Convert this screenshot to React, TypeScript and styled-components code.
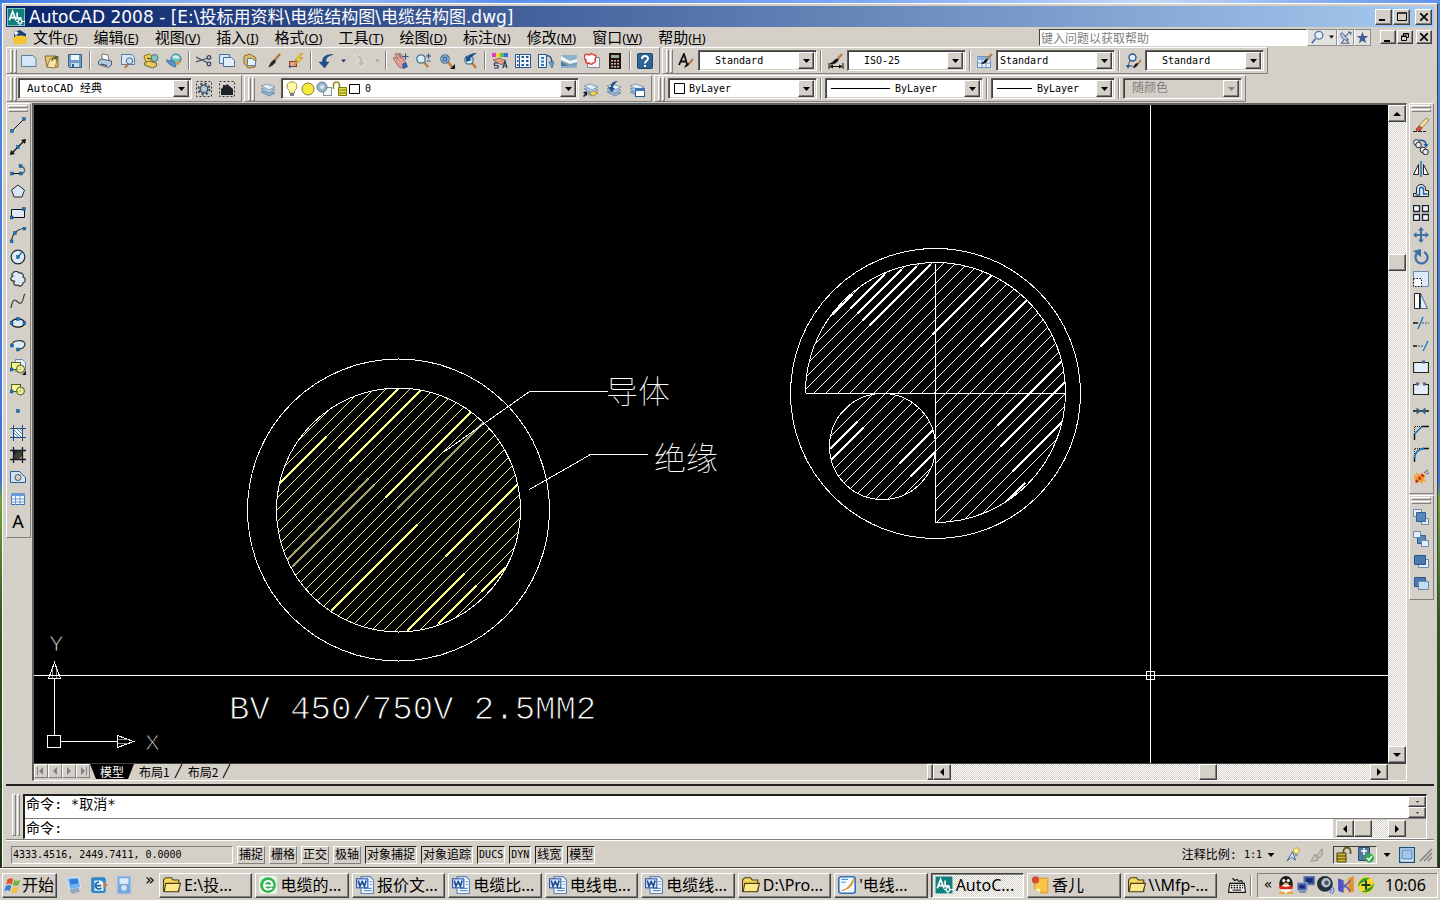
import React, { ReactNode } from "react";
import styled, { createGlobalStyle, css } from "styled-components";

const face = "#d4d0c8";
const han = '"Noto Sans CJK SC", sans-serif';
const ui = `"Noto Sans", ${han}`;
const mono = `"DejaVu Sans Mono", ${han}`;

const GlobalStyle = createGlobalStyle`
  *, *::before, *::after { box-sizing: border-box; }
  body { margin: 0; background: ${face}; color: #000; font-family: ${ui}; }
  button, select, input { font: inherit; color: inherit; margin: 0; padding: 0; border-radius: 0; }
  svg { display: block; flex: none; }
`;

const raised = css`
  background-color: ${face};
  border: 1px solid;
  border-color: #fff #404040 #404040 #fff;
  box-shadow: inset -1px -1px #808080;
`;
const checker = css`
  background: repeating-conic-gradient(#fff 0 25%, ${face} 0 50%) 0 0 / 2px 2px;
`;

/* ---------- page ---------- */
const Desktop = styled.div`
  min-height: 100vh;
  display: flex;
  flex-direction: column;
  background: linear-gradient(#4f86e6 0, #3f6fd8 480px, #6fa338 500px, #2f5a20 620px, #1c3010 100%);
`;
const Wallpaper = styled.div`
  height: 3px;
  background: linear-gradient(90deg, #3f7be4, #a9c6f6 20%, #5c8ff0 35%, #7fa8f4 60%, #c4d8f8 80%, #5f92ea);
`;
const AppWindow = styled.main`
  flex: 1;
  display: flex;
  flex-direction: column;
  margin: 0 2px;
  padding: 2px 3px 0;
  background: ${face};
  border: 1px solid;
  border-color: #fff #404040 #404040 #fff;
`;
const TitleBar = styled.header`
  display: flex;
  align-items: center;
  height: 21px;
  padding: 0 2px 0 1px;
  background: linear-gradient(90deg, #0a246a, #a6caf0);
  color: #fff;
`;
const TitleText = styled.h1`
  flex: 1;
  margin: 0 0 0 4px;
  font-family: "DejaVu Sans", ${han};
  font-size: 17px;
  line-height: 20px;
  font-weight: 400;
  white-space: nowrap;
`;
const CaptionGroup = styled.div`
  display: flex;
  gap: 1px;
  margin-right: 5px;
`;
const CaptionButton = styled.button`
  ${raised}
  display: grid;
  place-items: center;
  width: 17px;
  height: 16px;
`;
const MenuBar = styled.nav`
  display: flex;
  align-items: center;
  height: 20px;
  padding: 0 2px 0 1px;
`;
const MenuItem = styled.button`
  border: 0;
  background: none;
  margin-right: 16px;
  font-family: ${han};
  font-size: 15px;
  line-height: 20px;
  white-space: nowrap;
`;
const Key = styled.span`
  font-family: "Noto Sans", sans-serif;
  font-size: 13px;
`;
const Fill = styled.div`
  flex: 1;
`;
const Ask = styled.input`
  width: 268px;
  height: 17px;
  padding: 0 0 0 1px;
  border: 1px solid;
  border-color: #404040 #fff #fff #404040;
  background: #fff;
  font-family: ${han};
  font-size: 12px;
  &::placeholder { color: #808080; opacity: 1; }
`;
const AskButton = styled.button<{ $wide?: boolean }>`
  display: flex;
  align-items: center;
  justify-content: center;
  gap: 4px;
  width: ${(p) => (p.$wide ? 30 : 17)}px;
  height: 17px;
  border: 1px solid #909090;
  border-left-color: #fff;
  background: #e4e2de;
`;
const MdiGroup = styled.div`
  display: flex;
  gap: 1px;
  margin-left: 9px;
  & > :last-child { margin-left: 2px; }
`;
const MdiButton = styled(CaptionButton)`
  width: 16px;
  height: 14px;
`;

/* ---------- toolbars ---------- */
const ToolRow = styled.div`
  display: flex;
  align-items: flex-start;
  gap: 2px;
  height: 28px;
`;
const ToolStrip = styled.div<{ $gap?: number }>`
  display: flex;
  align-items: center;
  gap: ${(p) => p.$gap ?? 1}px;
  height: 27px;
  padding: 0 3px;
  border: 1px solid;
  border-color: #fff #808080 #808080 #fff;
`;
const Grip = styled.span<{ $flat?: boolean; $after?: number }>`
  flex: none;
  display: flex;
  flex-direction: ${(p) => (p.$flat ? "column" : "row")};
  gap: 1px;
  width: ${(p) => (p.$flat ? "20px" : "7px")};
  height: ${(p) => (p.$flat ? "7px" : "24px")};
  margin-right: ${(p) => p.$after ?? 0}px;
  &::before, &::after {
    content: "";
    flex: 1;
    border: 1px solid;
    border-color: #fff #808080 #808080 #fff;
  }
`;
const Rule = styled.span`
  flex: none;
  width: 2px;
  height: 19px;
  margin: 0 2px;
  background: linear-gradient(90deg, #808080 50%, #fff 50%);
`;
const Divider = styled.span`
  flex: none;
  width: 2px;
  height: 21px;
  margin: 0 3px;
  background: linear-gradient(90deg, #808080 50%, #fff 50%);
`;
const ToolButton = styled.button<{ $w?: number }>`
  flex: none;
  display: grid;
  place-items: center;
  width: ${(p) => p.$w ?? 22}px;
  height: 22px;
  border: 0;
  background: none;
  font-family: "Noto Sans", sans-serif;
  font-size: 18px;
  line-height: 22px;
`;
const Combo = styled.label<{ $w: number; $off?: boolean }>`
  flex: none;
  display: flex;
  align-items: center;
  width: ${(p) => p.$w}px;
  height: 21px;
  border: 1px solid;
  border-color: #606060 #fff #fff #606060;
  box-shadow: inset 1px 1px #404040, inset -1px -1px ${face};
  padding: 2px;
  background: ${(p) => (p.$off ? face : "#fff")};
  color: ${(p) => (p.$off ? "#808080" : "#000")};
`;
const ComboSelect = styled.select<{ $pad: number; $size: number }>`
  appearance: none;
  flex: 1;
  min-width: 0;
  height: 17px;
  padding: 0 0 0 ${(p) => p.$pad}px;
  border: 0;
  background: none;
  font-family: ${mono};
  font-size: ${(p) => p.$size}px;
  line-height: 17px;
  &:disabled { opacity: 1; }
`;
const ComboArrow = styled.span`
  ${raised}
  flex: none;
  display: grid;
  place-items: center;
  width: 16px;
  height: 17px;
`;
const Work = styled.div`
  flex: 1;
  display: flex;
  min-height: 560px;
`;
const SideBar = styled.div`
  flex: none;
  width: 25px;
  display: flex;
  flex-direction: column;
  gap: 1px;
`;
const SideStrip = styled.div`
  display: flex;
  flex-direction: column;
  align-items: center;
  padding: 1px 1px 5px 0;
  border: 1px solid;
  border-color: #fff #808080 #808080 #fff;
  & > :first-child { margin-bottom: 2px; }
`;
const Viewport = styled.section`
  flex: 1;
  min-width: 0;
  display: flex;
  flex-direction: column;
  margin: 0 2px 0 1px;
  border: solid;
  border-width: 2px 1px 1px 2px;
  border-color: #606060 #fff #fff #606060;
`;
const ViewRow = styled.div`
  flex: 1;
  display: flex;
  min-height: 0;
`;
const ModelSpace = styled.div`
  flex: 1;
  min-width: 0;
  display: grid;
  background: #000;
  overflow: hidden;
`;
const Drawing = styled.svg`
  width: 100%;
  height: 100%;
  min-height: 0;
`;
const Leader = styled.text`
  fill: #fff;
  font-family: ${han};
  font-weight: 100;
  font-size: 32px;
`;
const Caption = styled.text`
  fill: #fff;
  font-family: "Liberation Mono", monospace;
  font-size: 34px;
  stroke: #000;
  stroke-width: 1;
`;
const AxisName = styled.text`
  fill: #fff;
  font-family: "Liberation Sans", sans-serif;
  font-size: 22px;
  stroke: #000;
  stroke-width: 1;
`;
const ScrollTrack = styled.div<{ $across?: boolean }>`
  flex: ${(p) => (p.$across ? "0 1 455px" : "none")};
  display: flex;
  flex-direction: ${(p) => (p.$across ? "row" : "column")};
  ${(p) => (p.$across ? "height: 16px;" : "width: 18px;")}
  ${checker}
`;
const ScrollButton = styled.button<{ $w?: number; $h?: number }>`
  ${raised}
  flex: none;
  display: grid;
  place-items: center;
  width: ${(p) => p.$w ?? 18}px;
  height: ${(p) => p.$h ?? 17}px;
`;
const Space = styled.span<{ $grow: number }>`
  flex: ${(p) => p.$grow} 1 0;
`;
const TabRow = styled.div`
  display: flex;
  align-items: flex-start;
  height: 17px;
  border-top: 1px solid #404040;
`;
const TabNav = styled.button`
  display: grid;
  place-items: center;
  width: 14px;
  height: 14px;
  border: 1px solid;
  border-color: #fff #808080 #808080 #fff;
  background: ${face};
`;
const Tab = styled.button<{ $on?: boolean }>`
  height: 15px;
  padding: 0 ${(p) => (p.$on ? 10 : 4)}px;
  margin-left: ${(p) => (p.$on ? 0 : 1)}px;
  border: 0;
  background: ${(p) => (p.$on ? "#000" : "none")};
  color: ${(p) => (p.$on ? "#fff" : "#000")};
  clip-path: ${(p) => (p.$on ? "polygon(0 0, 100% 0, calc(100% - 6px) 100%, 6px 100%)" : "none")};
  font-family: ${han};
  font-size: 12px;
  line-height: 13px;
  white-space: nowrap;
`;
const SplitBar = styled.span`
  ${raised}
  flex: none;
  width: 6px;
  height: 16px;
`;
const Corner = styled.span`
  flex: none;
  width: 18px;
`;

/* ---------- command line ---------- */
const Command = styled.section`
  display: flex;
  height: 56px;
  padding: 8px 7px 0 6px;
  margin-top: 3px;
  border-top: 2px solid #202020;
  border-bottom: 1px solid #808080;
`;
const CommandGrip = styled(Grip)`
  height: 42px;
  width: 8px;
  margin-right: 3px;
`;
const CommandBox = styled.div`
  flex: 1;
  min-width: 0;
  border: 2px solid;
  border-width: 2px 1px 1px 2px;
  border-color: #202020 #fff #fff #202020;
`;
const CommandRow = styled.div<{ $last?: boolean }>`
  display: flex;
  height: ${(p) => (p.$last ? 19 : 23)}px;
  ${(p) => !p.$last && "border-bottom: 1px solid #808080;"}
`;
const CommandText = styled.div`
  flex: 1;
  display: flex;
  padding-left: 1px;
  background: #fff;
  font-family: ${mono};
  font-size: 14px;
  line-height: 16px;
`;
const Prompt = styled.label`
  line-height: 18px;
`;
const CommandInput = styled.input`
  flex: 1;
  min-width: 0;
  border: 0;
  outline: 0;
  background: none;
`;
const Stepper = styled.div`
  display: flex;
  flex-direction: column;
`;
const HistoryScroll = styled.div`
  flex: none;
  display: flex;
  width: 70px;
  margin: 1px 20px 0 3px;
  ${checker}
`;

/* ---------- status bar ---------- */
const StatusBar = styled.footer`
  display: flex;
  align-items: center;
  height: 27px;
  padding: 1px 1px 0 5px;
  border-top: 1px solid #fff;
  font-family: ${mono};
  font-size: 12px;
`;
const Coords = styled.output`
  width: 222px;
  height: 18px;
  padding-left: 1px;
  margin-right: 4px;
  border: 1px solid;
  border-color: #808080 #fff #fff #808080;
  font-size: 10px;
  line-height: 16px;
`;
const Toggles = styled.div`
  display: flex;
  gap: 4px;
`;
const Toggle = styled.button<{ $on?: boolean; $latin?: boolean }>`
  height: 18px;
  padding: 0 1px;
  border: 1px solid;
  border-color: ${(p) => (p.$on ? "#202020 #fff #fff #202020" : "#fff #808080 #808080 #fff")};
  background: none;
  font-size: ${(p) => (p.$latin ? 10 : 12)}px;
  line-height: 16px;
  white-space: nowrap;
`;
const Scale = styled.button`
  display: flex;
  align-items: center;
  gap: 5px;
  border: 0;
  background: none;
  line-height: 16px;
  margin-right: 6px;
`;
const ScaleValue = styled.span`
  font-size: 10px;
  margin-left: 2px;
`;
const StatusIcon = styled.button<{ $w?: number }>`
  display: grid;
  place-items: center;
  width: ${(p) => p.$w ?? 24}px;
  height: 18px;
  border: 0;
  background: none;
`;
const TrayBox = styled.div`
  display: flex;
  gap: 2px;
  width: 44px;
  height: 18px;
  margin: 0 2px 0 4px;
  border: 1px solid;
  border-color: #404040 #fff #fff #404040;
  & > button { width: 20px; height: 16px; }
`;

/* ---------- taskbar ---------- */
const TaskBar = styled.footer`
  display: flex;
  align-items: center;
  height: 32px;
  padding: 1px 2px 0;
  border-top: 1px solid #fff;
  background: ${face};
  font-size: 16px;
`;
const TaskButton = styled.button<{ $start?: boolean; $on?: boolean }>`
  ${raised}
  flex: ${(p) => (p.$start ? "none" : "1 1 0")};
  min-width: 0;
  display: flex;
  align-items: center;
  gap: ${(p) => (p.$start ? 0 : 3)}px;
  width: ${(p) => (p.$start ? 55 : 93)}px;
  height: 25px;
  padding: 0 1px 0 ${(p) => (p.$start ? 1 : 3)}px;
  white-space: nowrap;
  overflow: hidden;
  ${(p) =>
    p.$on &&
    css`
      ${checker}
      border-color: #404040 #fff #fff #404040;
      box-shadow: inset 1px 1px #808080;
    `}
`;
const TaskText = styled.span`
  line-height: 22px;
`;
const QuickLaunch = styled.div`
  display: flex;
  gap: 7px;
  margin: 0 11px 0 8px;
`;
const QuickButton = styled.button`
  display: grid;
  place-items: center;
  width: 18px;
  height: 20px;
  border: 0;
  background: none;
`;
const More = styled.button`
  width: 12px;
  height: 22px;
  margin-right: 3px;
  border: 0;
  background: none;
  font-family: "DejaVu Sans", sans-serif;
  font-size: 16px;
  line-height: 12px;
  padding-bottom: 10px;
`;
const Tasks = styled.div`
  flex: 1;
  min-width: 0;
  display: flex;
  gap: 3px;
`;
const Keyboard = styled(QuickButton)`
  width: 20px;
  margin: 0 0 0 10px;
`;
const Tray = styled.div`
  display: flex;
  align-items: center;
  gap: 3px;
  width: 181px;
  height: 25px;
  margin-left: 2px;
  padding-left: 4px;
  border: 1px solid;
  border-color: #808080 #fff #fff #808080;
`;
const Clock = styled.time`
  margin-left: 8px;
  font-size: 16px;
`;
const TrayMore = styled(More)`
  margin: 0;
  padding-bottom: 2px;
  font-size: 14px;
`;
const TrayIcon = styled(QuickButton)`
  width: 17px;
`;

/* ---------- icon art, drawn on a 16 by 16 grid ---------- */
const Dot = ({ x, y }: { x: number; y: number }) => (
  <rect x={x - 1.5} y={y - 1.5} width="3" height="3" fill="#1976b8" stroke="#0b3f70" strokeWidth=".4" />
);
const Down = ({ w = 7, fill = "#000" }: { w?: number; fill?: string }) => (
  <svg width={w} height="4" viewBox="0 0 7 4" aria-hidden="true"><path d="M0 0h7L3.500 4z" fill={fill} /></svg>
);
const Arrow = ({ dir, fill = "#000", bar }: { dir: "l" | "r" | "u" | "d"; fill?: string; bar?: boolean }) => {
  const d = { l: "M6 0v8L2 4z", r: "M2 0v8l4-4z", u: "M0 6h8L4 2z", d: "M0 2h8L4 6z" }[dir];
  return (
    <svg width="8" height="8" viewBox="0 0 8 8" aria-hidden="true">
      <path d={d} fill={fill} />
      {bar && <path d={dir === "l" ? "M0 0h1v8H0z" : "M7 0h1v8H7z"} fill={fill} />}
    </svg>
  );
};

const sheet = "#d6e6f4";
const blue = "#3f6fa8";
const lens = (x: number, y: number) => (
  <>
    <path d={`M${x + 3} ${y + 3}l4 5`} stroke="#c07a3a" strokeWidth="2.400" />
    <circle cx={x} cy={y} r="4.200" fill="#d7ecfa" stroke="#4f7188" strokeWidth="1.300" />
  </>
);
const layers = (x = 0, y = 0) => (
  <g transform={`translate(${x} ${y})`} stroke="#5d7f9e" strokeWidth=".7">
    <path d="M1 11l6-2 8 3-6 3z" fill="#8fb0cc" />
    <path d="M1 8l6-2 8 3-6 3z" fill="#b8cfe2" />
    <path d="M1 5l6-2 8 3-6 3z" fill="#e2edf6" />
  </g>
);
const brush = (
  <>
    <path d="M15 1L9 8" stroke="#a9703a" strokeWidth="2.200" />
    <path d="M9.500 6.500l1.500 1.800c-1 3-4 5.200-8 6.200 2-2 2-6 6.500-8z" fill="#2b2b2b" />
  </>
);
const block = (
  <>
    <rect x="1.500" y="3.500" width="9" height="7" fill="#f4f49a" stroke="#55601a" />
    <circle cx="10.500" cy="10" r="4" fill="#f0f08a" stroke="#55601a" fillOpacity=".75" />
    <Dot x={1.5} y={10.5} />
  </>
);
const cross = (x: number, y: number) => (
  <path d={`M${x - 3} ${y}h6M${x} ${y - 3}v6`} stroke="#2a5590" strokeWidth="1.200" />
);

const art: Record<string, ReactNode> = {
  app: (<>
    <rect width="16" height="16" fill="#0f7f7c" /><rect x="0" y="0" width="16" height="16" fill="none" stroke="#d8f0ee" />
    <path d="M2 11L5 3l3 8M3 8.500h4M9 4v5h4" stroke="#fff" strokeWidth="1.500" fill="none" />
    <path d="M11.500 8v8M8 12h8" stroke="#fff" /><rect x="10" y="10.500" width="3" height="3" fill="#0f7f7c" stroke="#fff" />
  </>),
  dwg: (<>
    <path d="M2 3l6-2 6 4v6H2z" fill="#1d3f78" /><path d="M1 9c4-3 9-3 14-1v6c-5 1-9 2-13 1z" fill="#f2c531" />
    <path d="M4 1l1 2 2 1-2 1-1 3-1-3-2-1 2-1z" fill="#fff" stroke="#7da2c8" strokeWidth=".4" />
  </>),
  new: <path d="M.5 2.500h11.500l3 3v8H.5z" fill={sheet} stroke="#5a7ea3" />,
  open: (<><path d="M1 3h8l5 3v8H3z" fill="#e8c678" stroke="#8a6524" /><path d="M3 14l3-8 8-3-3 12z" fill="#f7e4ac" stroke="#a37c33" /><path d="M7 9c0-3 2-5 4-5l-1-2 5 2-3 4-.5-2C9 6 8 8 7 9z" fill="#5c6034" /></>),
  save: (<><path d="M1.500 1.500h13v13h-12l-1-1z" fill="#6f9cc8" stroke="#32608f" /><path d="M4 2h8v5H4z" fill="#eef5fb" /><path d="M4 10h8v4H4z" fill="#cfdbe6" /><path d="M5 11h2v3H5z" fill="#32608f" /></>),
  print: (<><path d="M5 1l6 1 1 6-7-1z" fill="#fff" stroke="#777" /><path d="M1.500 8l3-2 10 2v4l-3 2.500-10-3z" fill="#b8c8dc" stroke="#50607c" /><path d="M4 11l6 1.500" stroke="#2d3d58" /></>),
  preview: (<><path d="M1.500 1.500h10l3 3v7h-13z" fill={sheet} stroke="#5a7ea3" /><path d="M8 11l-3 4" stroke="#b8743a" strokeWidth="2" /><circle cx="9.500" cy="8" r="3.200" fill="#c2dcf2" stroke="#4a6a88" /></>),
  publish: (<><path d="M1 3l5-2 5 3-1 5-7 1z" fill="#f3cf45" stroke="#8f7220" /><circle cx="11.500" cy="5" r="3.500" fill="#7fc3bb" stroke="#3c7a86" /><path d="M1.500 10l4-2 8 2v3l-4 2-8-3z" fill="#e8c85a" stroke="#75602a" /><path d="M4 5l4 1" stroke="#334" /></>),
  web: (<><circle cx="10" cy="6" r="5" fill="#6cc5c0" stroke="#397b8c" /><path d="M6 4c3-3 6-2 8 1-3 1-5 1-8-1z" fill="#d6efe8" /><path d="M0 7l8 1 2 6c-4 0-8-3-10-7z" fill="#5d93c6" stroke="#315e8e" strokeWidth=".6" /><path d="M9 11l5-4-1 5z" fill="#e2973c" /></>),
  cut: (<><path d="M0 4l12 6M0 9l12-4" stroke="#4b5560" strokeWidth="1.300" /><circle cx="13" cy="4.500" r="1.800" fill="none" stroke="#33426c" strokeWidth="1.300" /><circle cx="13" cy="11" r="1.800" fill="none" stroke="#33426c" strokeWidth="1.300" /></>),
  copy: (<><path d="M.5 1.500h10v9H.5z" fill={sheet} stroke="#4b7098" /><path d="M4.500 4.500h8l3 3v6h-11z" fill="#e2eef8" stroke="#4b7098" /></>),
  paste: (<><path d="M2 3l6-2 6 4-1 9-7 1-4-5z" fill="#e0bd68" stroke="#8b6a22" /><path d="M5.500 5.500h5l3 3v4h-8z" fill="#e8f2fa" stroke="#56789a" /></>),
  brush,
  match: (<><rect x="1.500" y="8.500" width="7" height="5" fill="#f0a184" stroke="#934028" /><path d="M0 14l3-2v3z" fill="#2a56b0" /><path d="M13 0L7 7h3l-4 6 9-8h-4l4-5z" fill="#fbd93c" stroke="#a27513" strokeWidth=".6" /></>),
  undo: <path d="M15 1.500C8 1 4 4 4.500 9H1l5.500 6L11 9H8c-.5-3 1-6 7-7.500z" fill="#1f4f8c" stroke="#163a68" strokeWidth=".5" />,
  redo: <path d="M2 2c7-1 10 3 9 7h3l-5 5-5-5h3c1-3-1-5-5-7z" fill="#c0bdb7" stroke="#efeeec" strokeWidth=".7" />,
  pan: (<><path d="M0 5l2-1 3 2-3-5 2-1 4 5-2-5 2 1 3 6 2 4-3 4-4-1z" fill="#e0a09a" stroke="#8c4a48" strokeWidth=".7" /><path d="M9 11l4-2 2 5-5 2z" fill="#375ea8" />{cross(12.500, 3.500)}</>),
  zoom: (<>{lens(5, 6)}<path d="M10 3h5M12.500.5v5M10.500 8h4" stroke="#2d5388" strokeWidth="1.200" /></>),
  zoomwin: (<>{lens(6, 6)}<rect x="4" y="4" width="4" height="4" fill="#7aa5d6" stroke="#234f86" /><path d="M16 11v5h-5z" /></>),
  zoomprev: (<>{lens(7, 7)}<path d="M15 0C9 0 7 2 6 4L4 3v6l6-2-2-1c2-3 4-4 7-6z" fill="#1f4f8c" /></>),
  props: (<><path d="M0 0h4v4H0z" fill="#e03cb8" /><path d="M4 0h4v4H4z" fill="#f2d53c" /><path d="M8 0h4v4H8z" fill="#4cc64c" /><path d="M12 0h4v4h-4z" fill="#4066e0" /><path d="M1 7l7-2 5 3-3 4-4-2z" fill="#e3a083" stroke="#7b4536" strokeWidth=".7" /><path d="M11 15l2-7 2 7M11.500 13h3M6 10H2.500v2.500H6V15H2" fill="none" stroke="#1f3d68" strokeWidth="1.200" /></>),
  center: (<><path d="M.5 1.500h15v13H.5z" fill="#eef6fc" stroke="#24568f" /><path d="M4.500 2v12" stroke="#24568f" />{[4, 8, 12].map((y) => <path key={y} d={`M6.500 ${y - 1}h2.500v2H6.500zM11 ${y - 1}h2.500v2H11zM2 ${y - 1}h1.500v2H2z`} fill="#24568f" />)}</>),
  palette: (<><path d="M.5 1.500h8v13h-8z" fill="#eaf4fb" stroke="#24568f" /><path d="M3 4h3v2H3zM3 7.500h3v2H3zM3 11h3v2H3z" fill="#3a77b4" /><path d="M8 3c4-1 6 2 6 7" stroke="#24568f" fill="none" strokeWidth="1.500" /><path d="M11 9h5l-2 6z" fill="#6fa3d2" stroke="#24568f" strokeWidth=".6" /></>),
  sheets: (<><path d="M0 2h16v13H0z" fill="#8fb2cc" /><path d="M0 3l10 6 6-2v5l-5 2L0 9z" fill="#7fa0b8" /><path d="M0 3l9 5 7-2v3l-7 2-9-4z" fill="#f2f7fa" /><path d="M0 9l8 4H0z" fill="#4f7a9c" /></>),
  markup: (<><path d="M3.500 4.500h12v10h-12z" fill="#f4f4f4" stroke="#7d8ba0" /><path d="M1 2c2-2 3 0 4 0 2-2 4-1 5 0 3 0 2 3 1 4 1 2 0 4-2 4-1 2-3 1-4 0-2 1-4-1-3-3-2-1-2-3-1-5z" fill="#fff" stroke="#e03c3c" strokeWidth="1.500" /></>),
  calc: (<><path d="M2 0h12v16H2z" fill="#1d1410" /><path d="M4 2h8v3H4z" fill="#98b094" />{[7, 10, 13].map((y) => <path key={y} d={`M4 ${y}h2v1.500H4zM7 ${y}h2v1.500H7zM10 ${y}h2v1.500h-2z`} fill="#d8b8a8" />)}</>),
  help: (<><rect x=".5" y=".5" width="15" height="15" rx="1" fill="#2d6496" stroke="#1a466f" /><path d="M5 6c0-4 6-4 6-.5C11 8 8 7.500 8 10.500" fill="none" stroke="#fff" strokeWidth="2" /><path d="M7 12h2v2H7z" fill="#fff" /></>),
  textstyle: (<><path d="M1 12L6 1l3 10M2.500 8.500H9" fill="none" stroke="#111" strokeWidth="1.800" /><path d="M15 6l-5 6" stroke="#b07a44" strokeWidth="2" /><path d="M11 10c0 3-3 4-5 5 1-2 2-5 5-5z" /></>),
  dimstyle: (<><path d="M14 1L8 8" stroke="#b07a44" strokeWidth="2" /><path d="M10 6c0 3-3 5-8 5 3-1 4-5 8-5zM1 10v6M15 10v6M2 13.500h12" stroke="#111" /><path d="M1 13.500l4-2v4zM15 13.500l-4-2v4z" /></>),
  tablestyle: (<><rect x=".5" y="3.500" width="13" height="11" fill="#eaf4fc" stroke="#6d93c8" /><path d="M0 4h14v3H0z" fill="#8fb4e0" /><path d="M5 4v11M9 4v11M0 10h14" stroke="#6d93c8" /><path d="M15 1L9 7" stroke="#b07a44" strokeWidth="2" /><path d="M11 6c0 3-4 5-7 5 2-1 3-5 7-5z" /></>),
  mleader: (<><circle cx="6.500" cy="4.500" r="3.500" fill="#e4eef8" stroke="#2b5a90" strokeWidth="1.400" /><path d="M4 7.500L2 13h5" stroke="#2b5a90" fill="none" /><path d="M0 12l4 0-2 4z" fill="#2b5a90" /><path d="M15 7l-4 5" stroke="#b07a44" strokeWidth="2" /><path d="M12 10c0 3-3 5-5 5 1-2 2-5 5-5z" /></>),
  gear: (<><path d="M.5.500h15v15H.5z" fill="none" stroke="#333" strokeDasharray="2 2" /><circle cx="8" cy="8" r="5.500" fill="none" stroke="#3b4c60" strokeWidth="2" strokeDasharray="2.200 2.100" /><circle cx="8" cy="8" r="3.800" fill="#a8bfd4" stroke="#3b4c60" strokeWidth="1.300" /><circle cx="8" cy="8" r="1.200" fill={face} /></>),
  home: (<><path d="M.5.5h15v15H.5z" fill="none" stroke="#333" strokeDasharray="2 2" /><path d="M2 8l2-2V4h2v1l2-2 6 5v6H2z" fill="#1c222a" /></>),
  layers: layers(),
  layercur: (<>{layers()}<path d="M6 12l5-2 4 2-5 3z" fill="#f2d65a" stroke="#8e7a22" strokeWidth=".6" /><path d="M0 11h4v4L3 14l-2 2-1-1 2-2z" /></>),
  layerprev: (<>{layers()}<path d="M12 0C7 0 4 3 5 6H2l4 5 3-4H7c0-3 2-5 5-7z" fill="#1f4f8c" /></>),
  layerstate: (<>{layers()}<rect x="6.500" y="7.500" width="9" height="8" fill="#fff" stroke="#24568f" /><path d="M6 7h10v3H6z" fill="#3f78b4" /></>),
  bulb: (<><path d="M8 1a4.500 4.500 0 0 0-2.500 8.500V12h5V9.500A4.500 4.500 0 0 0 8 1z" fill="#fdf7a8" stroke="#a59a3a" /><path d="M6 12h4v3H6z" fill="#7b7b7b" /></>),
  sun: <circle cx="8" cy="8" r="6" fill="#f6ec3c" stroke="#7f7a3a" />,
  freeze: (<><rect x="7.500" y="6.500" width="8" height="8" fill="#f2f4f6" stroke="#8896a4" /><circle cx="6" cy="6" r="5" fill="#9eb6c8" stroke="#5f7c94" /><circle cx="6" cy="6" r="2" fill="#d8e6f0" /></>),
  unlock: (<><path d="M1.500 8V4a2.500 2.500 0 0 1 6 0v4" fill="none" stroke="#93961c" strokeWidth="1.600" /><path d="M6.500 6.500h8v8h-8z" fill="#e4e03c" stroke="#7c7c12" /><path d="M7 9h7M7 12h7" stroke="#7c7c12" /></>),
  search: (<><path d="M5 10l-4 5" stroke="#5471a4" strokeWidth="2" /><circle cx="9" cy="6" r="4.500" fill="#e4effa" stroke="#5878ac" strokeWidth="1.500" /></>),
  dish: (<><path d="M2 3c0 6 4 9 10 8L4 2z" fill="#b5c4dc" stroke="#4a648e" /><path d="M7 7l6-5M11 1l4 1-1 3M6 11l-3 4h9l-3-4" stroke="#4a648e" fill="none" strokeWidth="1.300" /></>),
  star: <path d="M8 1l2 5h5l-4 3.500 1.500 5.500L8 12l-4.500 3L5 9.500 1 6h5z" fill="#3f5f96" />,
  line: (<><path d="M2 14L14 2" stroke="#111" /><Dot x={2} y={14} /><Dot x={14} y={2} /></>),
  xline: (<><path d="M1 15L15 1" stroke="#111" strokeWidth="1.200" /><path d="M0 16l1-5 4 4zM16 0l-5 1 4 4z" /><Dot x={8} y={8} /></>),
  pline: (<><path d="M2 12.500h9" stroke="#111" /><path d="M11 12.500c5 0 5-7-1-7" stroke="#666" fill="none" strokeWidth="1.300" /><Dot x={2} y={12.5} /><Dot x={11} y={12.5} /><Dot x={10.5} y={5} /></>),
  polygon: <path d="M8 2l6.500 5L12 14H4L1.500 7z" fill={sheet} stroke="#1f2c38" />,
  rect: (<><path d="M1.500 4.500h13v8h-13z" fill="#dcebf7" stroke="#111" /><Dot x={1.5} y={12.5} /><Dot x={14} y={4} /></>),
  arc: (<><path d="M1.500 14.500C2 7 7 2 14.500 1.500" fill="none" stroke="#333" strokeWidth="1.200" /><Dot x={1.5} y={14.5} /><Dot x={5} y={6} /><Dot x={14.5} y={1.5} /></>),
  circle: (<><circle cx="8" cy="8" r="6.800" fill="#dcebf7" stroke="#1f2c38" strokeWidth="1.200" /><path d="M8 8l4-5" stroke="#1976b8" strokeWidth="1.300" /><Dot x={8} y={8} /></>),
  cloud: <path d="M3 2c1-2 5-2 6 0 3-1 5 2 4 4 3 1 3 5 0 6 0 3-4 4-5 2-2 1-5 0-4-3 1-1 1-1 0-1-4 0-4-4-1-5C1 4 2 2 3 2z" fill="#dce8f2" stroke="#333" strokeWidth="1.200" />,
  spline: <path d="M1 15C2 8 4 6 6 7.500S10 12 12 9s1-6 3-8" fill="none" stroke="#444" strokeWidth="1.200" />,
  ellipse: (<><ellipse cx="8" cy="8" rx="6.500" ry="4.200" fill="#dcebf7" stroke="#111" strokeWidth="1.200" /><Dot x={1.500} y={8} /><Dot x={14.500} y={8} /><Dot x={8} y={4} /></>),
  ellarc: (<><path d="M2 8c0-5 12-6 13-1 0 4-3 5-7 5.500" fill="#dcebf7" stroke="#333" strokeWidth="1.200" /><Dot x={2} y={8.5} /><Dot x={8} y={12.5} /></>),
  insert: (<><path d="M5.500.5h7l3 3v9h-10z" fill="#e4eff8" stroke="#6d8cab" />{block}<path d="M16 12v4h-4z" /></>),
  block,
  point: <Dot x={8} y={8} />,
  hatch: (<><path d="M3 3h10v10H3z" fill="#f2f7fb" /><path d="M3 4l9 9M3 7l6 6M3 10l3 3M6 3l7 7M9 3l4 4" stroke="#2b78a8" strokeWidth=".9" /><path d="M3.500 0v16M12.500 0v16M0 3.500h16M0 12.500h16" stroke="#1f4f80" /></>),
  gradient: (<><path d="M3 3h10v10H3z" fill="#3d4433" /><path d="M3 3h6L3 9z" fill="#20222e" /><path d="M13 13H8l5-5z" fill="#a7a75c" /><path d="M3.500 0v16M12.500 0v16M0 3.500h16M0 12.500h16" stroke="#16182c" strokeWidth="1.300" /></>),
  region: (<><path d="M.5 2.500h9l6 6v5H.5z" fill="#d0e2f2" stroke="#2d6096" /><circle cx="8" cy="8.500" r="3" fill={face} stroke="#46586a" /></>),
  table: (<><path d="M1.500 2.500h13v11h-13z" fill="#f4faff" stroke="#3f6fb4" /><path d="M1 2h14v3H1z" fill="#6f98d4" /><path d="M5.500 3v11M10 3v11M1 8h14M1 11h14" stroke="#6f98d4" /></>),
  erase: (<><path d="M0 14.500h13" stroke="#222" strokeDasharray="4 1" /><path d="M6 9l7-8 3 2-7 8z" fill="#f2e09c" stroke="#81642a" strokeWidth=".7" /><path d="M3 12l3-3 3 2-2 3H4z" fill="#d9503c" stroke="#6f2a20" strokeWidth=".6" /></>),
  copyobj: (<><circle cx="3.500" cy="3.500" r="2.800" fill="#fff" stroke="#222" /><circle cx="5.500" cy="6" r="2.800" fill="#dcebf7" stroke="#222" /><circle cx="10" cy="11" r="2.800" fill="#fff" stroke="#222" /><circle cx="12.500" cy="13" r="2.800" fill="#dcebf7" stroke="#222" /><path d="M6 1.500c4-1 7 1 7 4" stroke="#245d98" fill="none" strokeWidth="1.500" /><path d="M10.500 5h5L13 9z" fill="#245d98" /></>),
  mirror: (<><path d="M8 0v16" stroke="#1976b8" strokeWidth="1.500" /><path d="M.5 13.500h5v-10zM15.500 13.500h-5v-10z" fill="#fff" stroke="#222" /></>),
  offset: (<><path d="M.5 13.500v-3h3V6c0-6 9-6 9 0v1.500h3v6z" fill="#dcebf7" stroke="#222" /><path d="M2.500 12h4V6.500c0-3 4-3 4 0V11h4" fill="none" stroke="#245d98" strokeWidth="1.400" /></>),
  array: <path d="M.5.500h6v6h-6zM9.500.5h6v6h-6zM.5 9.500h6v6h-6zM9.500 9.500h6v6h-6z" fill="#eef6fc" stroke="#1d2430" strokeWidth="1.300" />,
  move: <path d="M8 0l3 3.500H9V7h3.500V5L16 8l-3.500 3V9H9v3.500h2L8 16l-3-3.500h2V9H3.500v2L0 8l3.500-3v2H7V3.500H5z" fill={blue} />,
  rotate: (<><path d="M4 4.500a6 6 0 1 0 7-1.500" fill="none" stroke={blue} strokeWidth="2.200" /><path d="M0 2l8-2v8z" fill={blue} /></>),
  scale: (<><path d="M.5.5h15v15H.5z" fill="#dcebf7" stroke="#6d8cab" /><path d="M.5 7.500h8v8h-8z" fill="#fff" stroke="#111" strokeDasharray="1.500 1.500" /></>),
  stretch: (<><path d="M1.500.5h5v15h-5z" fill="#fff" stroke="#222" /><path d="M7.500.5l7 15h-7z" fill="#dcebf7" stroke="#46688c" /><path d="M7 0v16" stroke="#111" strokeDasharray="2 1" /></>),
  trim: (<><path d="M0 8h5" stroke="#111" strokeWidth="1.500" /><path d="M9 8h7" stroke="#245d98" strokeDasharray="2 1" /><path d="M5 14L10 2" stroke="#1976b8" strokeWidth="1.300" /></>),
  extend: (<><path d="M0 9h4" stroke="#111" strokeWidth="1.500" /><path d="M5 9h6" stroke="#245d98" strokeDasharray="2 1" /><path d="M10 14l5-10" stroke="#1976b8" strokeWidth="1.300" /></>),
  breakpt: (<><path d="M.5 3.500h15v10H.5z" fill="#e4eff8" stroke="#222" strokeWidth="1.200" /><rect x="9" y="1.500" width="3" height="3" fill="#4a6a88" /></>),
  breakln: (<><path d="M4 3.500H.5v10h15v-10H12" fill="#e4eff8" stroke="#222" strokeWidth="1.200" /><rect x="3" y="1.500" width="3" height="3" fill="#4a6a88" /><rect x="10" y="1.500" width="3" height="3" fill="#4a6a88" /></>),
  join: (<><path d="M0 8h16" stroke="#111" strokeWidth="1.500" /><path d="M8 8L3.500 4.500v7zM8 8l4.500-3.500v7z" fill="#35607c" /></>),
  chamfer: (<><path d="M1.500 15V9M9 1.500h7" stroke="#111" strokeWidth="1.400" /><path d="M1.500 9V1.500H9" stroke="#111" fill="none" strokeDasharray="1 1" /><path d="M1.500 9L9 1.500" stroke="#1976b8" strokeWidth="1.600" /></>),
  fillet: (<><path d="M1.500 15v-5M10 1.500h6" stroke="#111" strokeWidth="1.400" /><path d="M1.500 9V1.500H9" stroke="#111" fill="none" strokeDasharray="1 1" /><path d="M1.500 11C2 5 5 2 11 1.500" fill="none" stroke="#1976b8" strokeWidth="1.800" /></>),
  explode: (<><path d="M0 5l4 2-1-4 4 3 1-3 2 4 3-1-2 4 3 3-4-1-1 3-3-3-4 3 1-4-3-1 2-2z" fill="#f2a12c" /><path d="M3 13l8-8" stroke="#c8261c" strokeWidth="3" strokeDasharray="2.500 1.500" /><path d="M11 4l4-3M13 5l3-1" stroke="#777" strokeWidth="1.300" /></>),
  front: (<><path d="M.5.5h8v7h-8zM8.500 9.500h7v6h-7z" fill="#e4eff8" stroke="#6d8cab" /><path d="M3.500 3.500h9v9h-9z" fill="#5887bc" stroke="#2f5f94" /></>),
  back: (<><path d="M4.500 4.500h8v8h-8z" fill="#5887bc" stroke="#2f5f94" /><path d="M.5.500h7v6h-7zM8.500 9.500h7v6h-7z" fill="#e4eff8" stroke="#6d8cab" /></>),
  above: (<><path d="M5.500 6.500h10v8h-10z" fill="#e4eff8" stroke="#6d8cab" /><path d="M1.500 2.500h11v9h-11z" fill="#4a7ab0" stroke="#2b5687" /></>),
  under: (<><path d="M1.500 2.500h11v9h-11z" fill="#4a7ab0" stroke="#2b5687" /><path d="M5.500 6.500h10v8h-10z" fill="#c4dcf0" stroke="#6d8cab" /></>),
  annolight: (<><path d="M1 15l6-10 3 9-4-3z" fill="#dcecf8" stroke="#2b5f96" /><circle cx="11" cy="4" r="3.200" fill="#fbee8a" stroke="#b2a046" /><path d="M9.500 7h3v3h-3z" fill="#8d9aa8" /></>),
  annogray: <path d="M1 15l5-8 3 7zM8 8l6-7v6l-4 5z" fill="#c8c6c2" stroke="#8a8a8a" />,
  lock: (<><path d="M7.500 7V4a3 3 0 0 1 7 0v3" fill="none" stroke="#5f5810" strokeWidth="1.800" /><path d="M1 6h9v9H1z" fill="#d8c030" stroke="#40380a" /><path d="M1 9h9M1 12h9" stroke="#40380a" /></>),
  xref: (<><path d="M.5.5h11v13H.5z" fill="#507a9a" stroke="#2c4f70" /><path d="M3 4h6M6 1v7" stroke="#fff" strokeWidth="1.500" /><circle cx="11.500" cy="11" r="4.500" fill="#2fae4c" /><path d="M9 11l2 2 3-4" fill="none" stroke="#fff" strokeWidth="1.500" /></>),
  clean: (<><path d="M.5.5h15v15H.5z" fill="#dcebf7" stroke="#17507f" strokeWidth="1.500" /><path d="M3 3h10v9H3z" fill="#a2c8ea" stroke="#4c86bb" /></>),
  flag: (<><path d="M3 3c2-1.500 4-1 5 0L7 7.500c-2-1-3-1-5 0z" fill="#e2522c" /><path d="M9 3.500c2 1 3.500 1 5.500 0L13 8c-2 1-3.500 1-5 0z" fill="#6db33c" /><path d="M1.500 9c2-1.500 4-1 5 0l-1.500 4.500c-1.500-1-3-1-5 0z" fill="#3d7ad8" /><path d="M8 9.500c1.500 1 3.500 1 5 0L11.500 14c-2 1-3.500 1-5 0z" fill="#f2c12c" /></>),
  desktop: (<><path d="M2 2l10-1 2 9-10 2z" fill="#6fb0f0" stroke="#d4e4f4" /><path d="M4 12l8-2 1 4-7 2z" fill="#8fa8c4" /><path d="M4 3l7-.5 1 4-7 1z" fill="#2f7ae0" /></>),
  outlook: (<><rect x="1" y="1" width="13" height="14" rx="2" fill="#2f86cc" /><path d="M4 4h6l2 2v7H4z" fill="#e8f4fc" /><path d="M8 5.500a3 3 0 1 0 2 5M5 8.500h5" fill="none" stroke="#1c62a8" strokeWidth="1.500" /><path d="M12 5l4 3-4 3z" fill="#c47a4c" /></>),
  pda: (<><path d="M2 0h12v16H2z" fill="#7ba8dc" stroke="#a8c4e4" /><path d="M4 2h8v5H4z" fill="#dcebfa" /><circle cx="8" cy="10.500" r="2.500" fill="#d4e4f4" /></>),
  folder: (<><path d="M.5 3.500l2-2h5l1.500 2h5v10H.5z" fill="#f4d860" stroke="#4a3e14" /><path d="M2.500 6.500h13l-2 7.500H1z" fill="#fbe98a" stroke="#4a3e14" /></>),
  ie: (<><rect x="0" y="0" width="16" height="16" rx="3" fill="#e8f6e8" /><circle cx="8" cy="8" r="7" fill="#2fb548" /><path d="M4 8.500h8c0-5.500-7.500-5.500-7.500 0 0 4 5 4.500 7 2" fill="none" stroke="#fff" strokeWidth="1.800" /></>),
  word: (<><path d="M4.500.5h8l3 3v12h-11z" fill="#f4f9ff" stroke="#5c84bc" /><path d="M7 11h7M7 13h7M12 5h2M12 7.500h2" stroke="#6c94cc" /><rect x=".5" y="2.500" width="10" height="8" fill="#e4eefa" stroke="#2c5ca4" /><path d="M2 4l1.500 5L5.500 5l2 4L9 4" fill="none" stroke="#1f4a94" strokeWidth="1.500" /></>),
  note: (<><rect x=".7" y=".7" width="14.600" height="14.600" rx="2" fill="#f4faff" stroke="#2f6fb8" strokeWidth="1.400" /><path d="M3 13C8 12 11 8 14 2c0 6-4 10-11 11z" fill="#f0a42c" stroke="#c87c1c" strokeWidth=".5" /><path d="M3 3h6M3 5.500h4" stroke="#5c94cc" /></>),
  memo: (<><path d="M3 2h12v13H8l-5-3z" fill="#f9c448" stroke="#cf8d1c" strokeWidth=".7" /><path d="M8 15l-5-3 5-1z" fill="#fff0b8" /><circle cx="4" cy="3.500" r="3.200" fill="#d84c34" /></>),
  keyboard: (<><path d="M1.500 6.500h13l1 8H.5z" fill="#fff" stroke="#111" /><path d="M2.500 8.500h11M2.500 10.500h11" stroke="#111" strokeDasharray="1.500 1" strokeWidth="1.400" /><path d="M4 12.500h8" stroke="#111" /><path d="M13 6l-1-2-2 1-2-2-2 1-2-2" stroke="#111" fill="none" /></>),
  qq: (<><ellipse cx="8" cy="7" rx="6" ry="7" fill="#1b1b1b" /><ellipse cx="8" cy="11" rx="4.500" ry="4" fill="#fff" /><path d="M2 8c4 2 8 2 12 0v3c-4 1-8 1-12 0z" fill="#d8281c" /><circle cx="6" cy="4" r="1.400" fill="#fff" /><circle cx="10" cy="4" r="1.400" fill="#fff" /><path d="M5 6h6l-3 2zM2 14h5v2H2zM9 14h5v2H9z" fill="#f3a72c" /></>),
  net: (<><path d="M6 0h10v8H6z" fill="#3c5c9c" stroke="#8c9cbc" /><path d="M8 2h6v4H8z" fill="#1c2c7c" /><path d="M0 6h9v7H0z" fill="#4868a8" stroke="#a4b4cc" /><path d="M2 8h5v3H2z" fill="#1c2c7c" /><path d="M2 13h6v2H2z" fill="#7c8cac" /></>),
  sound: (<><circle cx="7" cy="7" r="7" fill="#26303a" /><circle cx="8" cy="6" r="4.200" fill="#b4c0cc" /><circle cx="8.500" cy="6" r="2" fill="#46525e" /><path d="M12 11c1 1 1 3-1 4M14 10c2 2 1 5-1 6" stroke="#5c7ce4" fill="none" /></>),
  map: (<><path d="M1 2l5 2v11l-5-2z" fill="#4c50c8" /><path d="M6 4l4-2v11l-4 2z" fill="#e0c8a0" /><path d="M10 2l5-2v14l-5 1z" fill="#e0962c" /><path d="M3 5l9 8M12 4L4 12" stroke="#6a5cc0" strokeWidth="1.500" /></>),
  shield: (<><circle cx="8" cy="8" r="7.500" fill="#f4d82c" /><path d="M1 10C1 4 6 0 12 2c-4 1-4 3-8 4-1 1-2 2-3 4zM15 6c0 6-5 10-11 8 4-1 5-3 8-4 1-1 2-2 3-4z" fill="#2c9c34" /><path d="M8 4v8M4 8h8" stroke="#14401c" strokeWidth="1.800" /></>),
};

const Icon = ({ name, size = 16 }: { name: string; size?: number }) => (
  <svg width={size} height={size} viewBox="0 0 16 16" fill="#111" aria-hidden="true">{art[name]}</svg>
);

type PickProps = { label: string; value: string; w: number; pad?: number; size?: number; off?: boolean; children?: ReactNode };
const Pick = ({ label, value, w, pad = 4, size = 10, off, children }: PickProps) => (
  <Combo $w={w} $off={off}>
    {children}
    <ComboSelect aria-label={label} $pad={pad} $size={size} disabled={off}>
      <option>{value}</option>
    </ComboSelect>
    <ComboArrow><Down fill={off ? "#808080" : "#000"} /></ComboArrow>
  </Combo>
);
const Buttons = ({ names, w }: { names: string[]; w?: number }) => (
  <>
    {names.map((n) => <ToolButton key={n} $w={w} aria-label={n}><Icon name={n} /></ToolButton>)}
  </>
);

/* ---------- drawing ---------- */
type Seg = [number, number, number];
type Pattern = { from: number; step: number };
const cablePattern: Pattern = { from: 727.5, step: 11.93 };
const corePattern: Pattern = { from: 1122.6, step: 12.03 };
/* x + y of the n-th hatch line, on whole pixels */
const lineSum = (p: Pattern, n: number) => Math.round(p.from + n * p.step);

const Hatch = ({ pattern, count, clip, color }: { pattern: Pattern; count: number; clip: string; color: string }) => (
  <g clipPath={`url(#${clip})`} stroke={color} strokeWidth="1">
    {Array.from({ length: count }, (_, i) => {
      const c = lineSum(pattern, i);
      return <line key={i} x1={c - 700} y1={700} x2={c - 200} y2={200} />;
    })}
  </g>
);
/* heavier runs of the hatch: start x, start y, horizontal run */
const Runs = ({ items, pattern, clip, color }: { items: Seg[]; pattern: Pattern; clip: string; color: string }) => (
  <g clipPath={`url(#${clip})`} stroke={color} strokeWidth="2">
    {items.map(([x, y, run]) => {
      const c = lineSum(pattern, Math.round((x + y - pattern.from) / pattern.step));
      return <line key={`${x}-${y}`} x1={x} y1={c - x} x2={x + run} y2={c - x - run} />;
    })}
  </g>
);
const cableRuns: Seg[] = [
  [279, 484, 47], [338, 450, 61], [349, 462, 72], [385, 497, 86], [445, 557, 73], [331, 612, 86], [407, 632, 57], [438, 625, 38], [481, 593, 24],
];
const faintRuns: Seg[] = [[287, 559, 81], [292, 567, 82], [397, 509, 87]];
const coreRuns: Seg[] = [
  [832, 314, 20], [850, 309, 34], [857, 314, 44], [862, 321, 54], [869, 326, 61], [932, 335, 59], [980, 347, 46], [997, 425, 65], [1000, 447, 64], [1012, 471, 50], [1003, 503, 22],
  [830, 448, 27], [831, 459, 32], [899, 463, 33], [910, 477, 25],
];

const CadDrawing = () => (
  <Drawing role="img" aria-label="电缆结构图">
    <g transform="translate(-34 -105)" fill="none" stroke="#fff" shapeRendering="crispEdges">
      <defs>
        <clipPath id="cable"><circle cx="398.500" cy="510" r="122" /></clipPath>
        <clipPath id="cores">
          <path d="M805.500 393.500A130 130 0 1 1 935.500 522.500V393.500z" />
          <circle cx="882.500" cy="446.500" r="53" />
        </clipPath>
      </defs>
      <Hatch pattern={cablePattern} count={32} clip="cable" color="#f0f090" />
      <Runs pattern={cablePattern} items={cableRuns} clip="cable" color="#ffff80" />
      <Runs pattern={cablePattern} items={faintRuns} clip="cable" color="#a0a068" />
      <circle cx="398.500" cy="510" r="151" />
      <circle cx="398.500" cy="510" r="122" />
      <path d="M444.500 451.500L529.500 391.500H608M529.500 489.500L590.500 454.500H648" />
      <Hatch pattern={corePattern} count={32} clip="cores" color="#fff" />
      <Runs pattern={corePattern} items={coreRuns} clip="cores" color="#fff" />
      <circle cx="935.500" cy="393.500" r="145" />
      <path d="M805.500 393.500A130 130 0 1 1 935.500 522.500V263.500M805.500 393.500H1065" />
      <circle cx="882.500" cy="446.500" r="53" />
      <path d="M47.500 735.500h13v12h-13zM60.500 741.500h57M54.500 735.500v-57M117.500 735.500v12l16-6zM48.500 678.500h12l-6-16z" />
      <path d="M118 739.500h10M118 743.500h10M52.500 678v-9M56.500 678v-9" stroke="#909090" />
    </g>
    <g transform="translate(-34 -105)">
      <Leader x="606" y="403">导体</Leader>
      <Leader x="654" y="470">绝缘</Leader>
      <Caption x="229" y="719">BV 450/750V 2.5MM2</Caption>
      <AxisName x="49" y="651">Y</AxisName>
      <AxisName x="145" y="750">X</AxisName>
    </g>
    <g fill="none" stroke="#fff" shapeRendering="crispEdges">
      <line x1="1116.500" y1="0" x2="1116.500" y2="100%" />
      <line x1="0" y1="570.500" x2="100%" y2="570.500" />
      <rect x="1112.500" y="566.500" width="8" height="8" />
    </g>
  </Drawing>
);

const menus: [string, string][] = [
  ["文件", "F"], ["编辑", "E"], ["视图", "V"], ["插入", "I"], ["格式", "O"], ["工具", "T"], ["绘图", "D"], ["标注", "N"], ["修改", "M"], ["窗口", "W"], ["帮助", "H"],
];
const standard = [
  ["new", "open", "save"], ["print", "preview", "publish", "web"], ["cut", "copy", "paste", "brush", "match"],
];
const drawTools = ["line", "xline", "pline", "polygon", "rect", "arc", "circle", "cloud", "spline", "ellipse", "ellarc", "insert", "block", "point", "hatch", "gradient", "region", "table"];
const modifyTools = ["erase", "copyobj", "mirror", "offset", "array", "move", "rotate", "scale", "stretch", "trim", "extend", "breakpt", "breakln", "join", "chamfer", "fillet", "explode"];
const toggles: { text: string; on?: boolean; latin?: boolean }[] = [
  { text: "捕捉" }, { text: "栅格" }, { text: "正交" }, { text: "极轴" }, { text: "对象捕捉", on: true }, { text: "对象追踪", on: true },
  { text: "DUCS", on: true, latin: true }, { text: "DYN", on: true, latin: true }, { text: "线宽", on: true }, { text: "模型", on: true },
];
const tasks: [string, string][] = [
  ["folder", "E:\\投..."], ["ie", "电缆的..."], ["word", "报价文..."], ["word", "电缆比..."], ["word", "电线电..."], ["word", "电缆线..."],
  ["folder", "D:\\Pro..."], ["note", "'电线..."], ["app", "AutoC..."], ["memo", "香儿"], ["folder", "\\\\Mfp-..."],
];
const Slash = () => (
  <svg width="9" height="15" viewBox="0 0 9 15" aria-hidden="true"><path d="M8 0L1 14" stroke="#222" strokeWidth="1.200" /></svg>
);
const Min = () => <svg width="9" height="9" aria-hidden="true"><path d="M0 7h6v2H0z" /></svg>;
const Max = () => <svg width="10" height="9" aria-hidden="true"><path d="M.5 1h9v7.500h-9zM0 1h10" fill="none" stroke="#000" /></svg>;
const Restore = () => <svg width="8" height="8" aria-hidden="true"><path d="M2.500 3V.5h5v4H6M.5 3.500h5v4h-5zM0 3h6M2 1h6" fill="none" stroke="#000" /></svg>;
const Close = () => <svg width="8" height="8" aria-hidden="true"><path d="M0 0l8 8M8 0L0 8" stroke="#000" strokeWidth="1.700" /></svg>;

export default function App() {
  return (
    <Desktop>
      <GlobalStyle />
      <Wallpaper />
      <AppWindow>
        <TitleBar>
          <Icon name="app" size={18} />
          <TitleText>AutoCAD 2008 - [E:\投标用资料\电缆结构图\电缆结构图.dwg]</TitleText>
          <CaptionGroup>
            <CaptionButton aria-label="最小化"><Min /></CaptionButton>
            <CaptionButton aria-label="最大化"><Max /></CaptionButton>
          </CaptionGroup>
          <CaptionButton aria-label="关闭"><Close /></CaptionButton>
        </TitleBar>
        <MenuBar>
          <ToolButton $w={26} aria-label="图形"><Icon name="dwg" /></ToolButton>
          {menus.map(([name, key]) => (
            <MenuItem key={key}>{name}<Key>(<u>{key}</u>)</Key></MenuItem>
          ))}
          <Fill />
          <Ask aria-label="帮助" placeholder="键入问题以获取帮助" />
          <AskButton $wide aria-label="搜索"><Icon name="search" size={14} /><Down w={5} /></AskButton>
          <AskButton aria-label="通讯中心"><Icon name="dish" size={13} /></AskButton>
          <AskButton aria-label="收藏夹"><Icon name="star" size={13} /></AskButton>
          <MdiGroup>
            <MdiButton aria-label="最小化图形"><Min /></MdiButton>
            <MdiButton aria-label="还原图形"><Restore /></MdiButton>
            <MdiButton aria-label="关闭图形"><Close /></MdiButton>
          </MdiGroup>
        </MenuBar>
        <ToolRow>
          <ToolStrip>
            <Grip />
            {standard.map((g) => (
              <React.Fragment key={g[0]}><Buttons names={g} /><Rule /></React.Fragment>
            ))}
            <Buttons names={["undo"]} />
            <ToolButton $w={10} aria-label="放弃列表"><Down w={5} fill="#1c3c70" /></ToolButton>
            <Buttons names={["redo"]} />
            <ToolButton $w={10} aria-label="重做列表"><Down w={5} fill="#a8a8a8" /></ToolButton>
            <Rule />
            <Buttons names={["pan", "zoom", "zoomwin", "zoomprev"]} />
            <Rule />
            <Buttons names={["props", "center", "palette", "sheets", "markup", "calc"]} />
            <Rule />
            <Buttons names={["help"]} />
          </ToolStrip>
          <ToolStrip $gap={0}>
            <Grip />
            <Buttons names={["textstyle"]} w={25} />
            <Pick label="文字样式" value="Standard" w={119} pad={14} />
            <Divider />
            <Buttons names={["dimstyle"]} />
            <Pick label="标注样式" value="ISO-25" w={119} pad={14} />
            <Divider />
            <Buttons names={["tablestyle"]} />
            <Pick label="表格样式" value="Standard" w={119} pad={1} />
            <Divider />
            <Buttons names={["mleader"]} />
            <Pick label="多重引线样式" value="Standard" w={119} pad={14} />
          </ToolStrip>
        </ToolRow>
        <ToolRow>
          <ToolStrip>
            <Grip />
            <Pick label="工作空间" value="AutoCAD 经典" w={174} pad={6} size={11} />
            <Buttons names={["gear", "home"]} />
          </ToolStrip>
          <ToolStrip>
            <Grip />
            <Buttons names={["layers"]} w={24} />
            <Pick label="图层" value="0" w={298} pad={4}>
              <Icon name="bulb" /><Icon name="sun" /><Icon name="freeze" /><Icon name="unlock" />
              <svg width="13" height="12" aria-hidden="true"><path d="M1.500 1.500h10v9h-10z" fill="#fff" stroke="#000" /></svg>
            </Pick>
            <Buttons names={["layercur", "layerprev", "layerstate"]} />
          </ToolStrip>
          <ToolStrip $gap={0}>
            <Grip $after={3} />
            <Pick label="颜色" value="ByLayer" w={149} pad={2}>
              <svg width="16" height="11" aria-hidden="true"><path d="M3.500.5h10v10h-10z" fill="#fff" stroke="#000" /></svg>
            </Pick>
            <Divider />
            <Pick label="线型" value="ByLayer" w={158} pad={5}>
              <svg width="62" height="1" aria-hidden="true"><path d="M3 0h59v1H3z" /></svg>
            </Pick>
            <Divider />
            <Pick label="线宽" value="ByLayer" w={124} pad={5}>
              <svg width="38" height="1" aria-hidden="true"><path d="M3 0h35v1H3z" /></svg>
            </Pick>
            <Divider />
            <Pick label="打印样式" value="随颜色" w={119} pad={6} size={12} off />
          </ToolStrip>
        </ToolRow>
        <Work>
          <SideBar>
            <SideStrip>
              <Grip $flat />
              <Buttons names={drawTools} />
              <ToolButton aria-label="多行文字">A</ToolButton>
            </SideStrip>
          </SideBar>
          <Viewport>
            <ViewRow>
              <ModelSpace><CadDrawing /></ModelSpace>
              <ScrollTrack>
                <ScrollButton aria-label="向上"><Arrow dir="u" /></ScrollButton>
                <Space $grow={132} />
                <ScrollButton aria-label="垂直滚动块" />
                <Space $grow={475} />
                <ScrollButton aria-label="向下"><Arrow dir="d" /></ScrollButton>
              </ScrollTrack>
            </ViewRow>
            <TabRow>
              <TabNav aria-label="第一个"><Arrow dir="l" fill="#808080" bar /></TabNav>
              <TabNav aria-label="上一个"><Arrow dir="l" fill="#808080" /></TabNav>
              <TabNav aria-label="下一个"><Arrow dir="r" fill="#808080" /></TabNav>
              <TabNav aria-label="最后一个"><Arrow dir="r" fill="#808080" bar /></TabNav>
              <Tab $on>模型</Tab>
              <Tab>布局1</Tab>
              <Slash />
              <Tab>布局2</Tab>
              <Slash />
              <Fill />
              <SplitBar />
              <ScrollTrack $across>
                <ScrollButton $h={16} aria-label="向左"><Arrow dir="l" /></ScrollButton>
                <Space $grow={249} />
                <ScrollButton $h={16} aria-label="水平滚动块" />
                <Space $grow={154} />
                <ScrollButton $h={16} aria-label="向右"><Arrow dir="r" /></ScrollButton>
              </ScrollTrack>
              <Corner />
            </TabRow>
          </Viewport>
          <SideBar>
            <SideStrip>
              <Grip $flat />
              <Buttons names={modifyTools} />
            </SideStrip>
            <SideStrip>
              <Grip $flat />
              <Buttons names={["front", "back", "above", "under"]} />
            </SideStrip>
          </SideBar>
        </Work>
        <Command>
          <CommandGrip />
          <CommandBox>
            <CommandRow>
              <CommandText>命令: *取消*</CommandText>
              <Stepper>
                <ScrollButton $h={11} aria-label="历史向上"><Down w={3} /></ScrollButton>
                <ScrollButton $h={11} aria-label="历史向下"><Down w={3} /></ScrollButton>
              </Stepper>
            </CommandRow>
            <CommandRow $last>
              <CommandText>
                <Prompt htmlFor="command">命令:</Prompt>
                <CommandInput id="command" />
              </CommandText>
              <HistoryScroll>
                <ScrollButton aria-label="命令向左"><Arrow dir="l" /></ScrollButton>
                <ScrollButton aria-label="命令滚动块" />
                <Fill />
                <ScrollButton aria-label="命令向右"><Arrow dir="r" /></ScrollButton>
              </HistoryScroll>
            </CommandRow>
          </CommandBox>
        </Command>
        <StatusBar>
          <Coords>4333.4516, 2449.7411, 0.0000</Coords>
          <Toggles>
            {toggles.map((t) => (
              <Toggle key={t.text} $on={t.on} $latin={t.latin}>{t.text}</Toggle>
            ))}
          </Toggles>
          <Fill />
          <Scale>注释比例: <ScaleValue>1:1</ScaleValue><Down w={8} /></Scale>
          <StatusIcon aria-label="注释可见性"><Icon name="annolight" size={15} /></StatusIcon>
          <StatusIcon aria-label="自动缩放"><Icon name="annogray" size={14} /></StatusIcon>
          <TrayBox>
            <StatusIcon aria-label="锁定"><Icon name="lock" /></StatusIcon>
            <StatusIcon aria-label="外部参照"><Icon name="xref" /></StatusIcon>
          </TrayBox>
          <StatusIcon $w={16} aria-label="状态栏菜单"><Down w={8} /></StatusIcon>
          <StatusIcon aria-label="清除屏幕"><Icon name="clean" /></StatusIcon>
          <svg width="14" height="14" viewBox="0 0 14 14" aria-hidden="true"><path d="M1 13L13 1M5 13l8-8M9 13l4-4" stroke="#808080" strokeWidth="1.500" /></svg>
        </StatusBar>
      </AppWindow>
      <TaskBar>
        <TaskButton $start><Icon name="flag" size={18} /><TaskText>开始</TaskText></TaskButton>
        <QuickLaunch>
          <QuickButton aria-label="显示桌面"><Icon name="desktop" size={18} /></QuickButton>
          <QuickButton aria-label="邮件"><Icon name="outlook" size={18} /></QuickButton>
          <QuickButton aria-label="设备"><Icon name="pda" size={18} /></QuickButton>
        </QuickLaunch>
        <More>»</More>
        <Tasks>
          {tasks.map(([icon, text]) => (
            <TaskButton key={text} $on={icon === "app"}><Icon name={icon} size={18} /><TaskText>{text}</TaskText></TaskButton>
          ))}
        </Tasks>
        <Keyboard aria-label="输入法"><Icon name="keyboard" size={18} /></Keyboard>
        <Divider />
        <Tray>
          <TrayMore>«</TrayMore>
          {["qq", "net", "sound", "map", "shield"].map((n) => (
            <TrayIcon key={n} aria-label={n}><Icon name={n} size={18} /></TrayIcon>
          ))}
          <Clock>10:06</Clock>
        </Tray>
      </TaskBar>
    </Desktop>
  );
}
